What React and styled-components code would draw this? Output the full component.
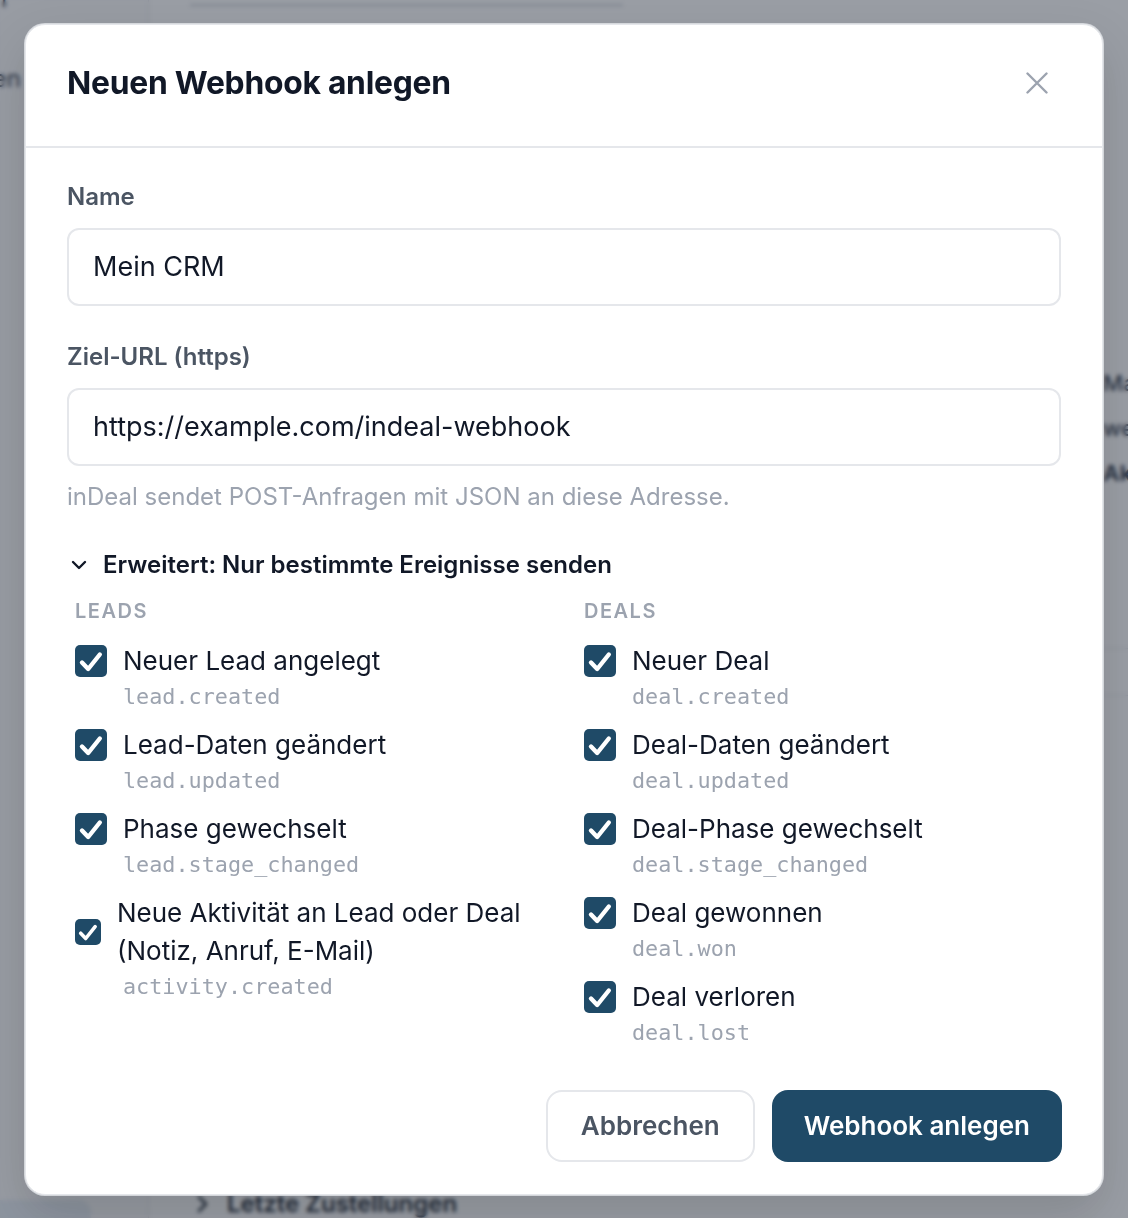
import React from "react";
import styled, { createGlobalStyle } from "styled-components";

const GlobalStyle = createGlobalStyle`
  html, body {
    margin: 0;
    padding: 0;
    height: 100%;
    overflow: hidden;
  }
  body {
    font-family: Inter, "Noto Sans", "Liberation Sans", sans-serif;
    background: #ffffff;
    -webkit-font-smoothing: antialiased;
  }
  * { box-sizing: border-box; }
`;

/* ---------- page behind the dialog ---------- */

const Page = styled.div`
  display: flex;
  height: 100vh;
  overflow: hidden;
  background: #ffffff;
`;

const Sidebar = styled.aside`
  width: 149px;
  flex-shrink: 0;
  display: flex;
  flex-direction: column;
  border-right: 1px solid #e5e7eb;
  background: #fbfbfc;
  overflow: hidden;
`;

const NavItem = styled.div`
  display: flex;
  justify-content: flex-end;
  font-size: 24px;
  color: #374151;
  white-space: nowrap;
  padding-right: ${(p) => p.$inset}px;
  line-height: 32px;
  margin-top: ${(p) => p.$top || 0}px;
`;

const SidebarCard = styled.div`
  margin-top: auto;
  width: 91px;
  height: 30px;
  margin-bottom: -12px;
  border-radius: 0 12px 0 0;
  background: #e8eef5;
`;

const Main = styled.main`
  flex: 1;
  display: grid;
  grid-template-columns: 889px 320px;
  column-gap: 24px;
  padding-left: 41px;
  overflow: hidden;
`;

const MainColumn = styled.div`
  display: flex;
  flex-direction: column;
  height: 100vh;
`;

const TopRule = styled.div`
  width: 433px;
  height: 6px;
  border-bottom: 2px solid #d1d5db;
`;

const Disclosure = styled.div`
  margin-top: auto;
  margin-bottom: -3px;
  display: flex;
  align-items: center;
  gap: 18px;
  padding-left: 7px;
  font-size: 24px;
  font-weight: 600;
  color: #1f2937;
  line-height: 34px;
`;

const SideInfo = styled.div`
  padding-top: 361px;
  display: flex;
  flex-direction: column;
`;

const InfoLine = styled.div`
  font-size: 22px;
  line-height: 45px;
  font-weight: ${(p) => (p.$bold ? 700 : 500)};
  color: #374151;
  white-space: nowrap;
`;

const InfoDivider = styled.div`
  height: 1px;
  background: #e5e7eb;
  margin-top: ${(p) => p.$top}px;
`;

/* ---------- dialog ---------- */

const Overlay = styled.div`
  position: fixed;
  inset: 0;
  display: flex;
  align-items: center;
  justify-content: center;
  background: rgba(31, 41, 55, 0.45);
  backdrop-filter: blur(2px);
`;

const Dialog = styled.div`
  width: 1078px;
  background: #ffffff;
  border: 1px solid #e5e7eb;
  border-radius: 20px;
  box-shadow: 0 0 0 1px rgba(229, 231, 235, 0.8), 0 20px 50px rgba(0, 0, 0, 0.15);
  display: flex;
  flex-direction: column;
`;

const Header = styled.div`
  display: flex;
  align-items: center;
  justify-content: space-between;
  padding: 38px 48px 43px 41px;
  border-bottom: 2px solid #e5e7eb;
`;

const Title = styled.h2`
  margin: 0;
  font-size: 31.8px;
  line-height: 40px;
  font-weight: 700;
  color: #111827;
  letter-spacing: -0.25px;
`;

const CloseButton = styled.button`
  border: none;
  background: none;
  padding: 6px;
  display: flex;
  cursor: pointer;
  color: #9ca3af;
`;

const Body = styled.div`
  padding: 34px 41px 0 41px;
  display: flex;
  flex-direction: column;
`;

const Field = styled.div`
  display: flex;
  flex-direction: column;
  & + & {
    margin-top: 36px;
  }
`;

const Label = styled.label`
  font-size: 24px;
  line-height: 30px;
  font-weight: 600;
  color: #4b5563;
  margin-bottom: 16px;
`;

const Input = styled.input`
  height: 78px;
  width: 100%;
  border: 2px solid #e5e7eb;
  border-radius: 12px;
  padding: 0 24px;
  font-family: inherit;
  font-size: 27px;
  color: #111827;
  outline: none;
  background: #ffffff;
`;

const Hint = styled.p`
  margin: 16px 0 0 0;
  font-size: 24px;
  line-height: 30px;
  color: #9ca3af;
`;

const AdvancedToggle = styled.button`
  margin-top: 38px;
  align-self: flex-start;
  display: flex;
  align-items: center;
  gap: 15px;
  border: none;
  background: none;
  padding: 0 0 0 3px;
  font-family: inherit;
  font-size: 24px;
  line-height: 30px;
  font-weight: 600;
  color: #111827;
  cursor: pointer;
`;

const EventGrid = styled.div`
  margin-top: 17px;
  padding-left: 8px;
  display: grid;
  grid-template-columns: 1fr 1fr;
  column-gap: 32px;
`;

const EventGroup = styled.div`
  display: flex;
  flex-direction: column;
  gap: 14px;
`;

const GroupTitle = styled.div`
  font-size: 20px;
  line-height: 28px;
  font-weight: 600;
  letter-spacing: 1.5px;
  color: #9ca3af;
  text-transform: uppercase;
  margin-bottom: 3px;
`;

const EventItem = styled.div`
  display: flex;
  flex-direction: column;
`;

const EventRow = styled.label`
  display: flex;
  align-items: center;
  gap: 16px;
  cursor: pointer;
`;

const Box = styled.span`
  width: ${(p) => p.$size || 32}px;
  height: ${(p) => p.$size || 32}px;
  flex-shrink: 0;
  border-radius: 5px;
  background: #1f4a67;
  display: flex;
  align-items: center;
  justify-content: center;
`;

const EventName = styled.span`
  font-size: 26px;
  line-height: 38px;
  color: #111827;
`;

const EventCode = styled.code`
  margin: 2px 0 0 48px;
  font-family: "DejaVu Sans Mono", "Liberation Mono", monospace;
  font-size: 21.8px;
  line-height: 30px;
  color: #9ca3af;
`;

const Footer = styled.div`
  display: flex;
  justify-content: flex-end;
  gap: 17px;
  padding: 42px 40px 32px 41px;
`;

const Button = styled.button`
  height: 72px;
  border-radius: 16px;
  font-family: inherit;
  font-size: 26px;
  font-weight: 600;
  cursor: pointer;
  padding: 0 ${(p) => (p.$primary ? 32 : 33)}px;
  border: ${(p) => (p.$primary ? "none" : "2px solid #e5e7eb")};
  background: ${(p) => (p.$primary ? "#1f4a67" : "#ffffff")};
  color: ${(p) => (p.$primary ? "#ffffff" : "#4b5563")};
`;

const Checkbox = ({ size }) => (
  <Box $size={size}>
    <svg width="100%" height="100%" viewBox="0 0 32 32" fill="none">
      <path
        d="M7 17.5 L13.2 24 L24.8 9.5"
        stroke="#ffffff"
        strokeWidth="4.4"
        strokeLinecap="round"
        strokeLinejoin="round"
      />
    </svg>
  </Box>
);

const leadEvents = [
  { name: "Neuer Lead angelegt", code: "lead.created" },
  { name: "Lead-Daten geändert", code: "lead.updated" },
  { name: "Phase gewechselt", code: "lead.stage_changed" },
  { name: "Neue Aktivität an Lead oder Deal (Notiz, Anruf, E-Mail)", code: "activity.created", size: 26 },
];

const dealEvents = [
  { name: "Neuer Deal", code: "deal.created" },
  { name: "Deal-Daten geändert", code: "deal.updated" },
  { name: "Deal-Phase gewechselt", code: "deal.stage_changed" },
  { name: "Deal gewonnen", code: "deal.won" },
  { name: "Deal verloren", code: "deal.lost" },
];

function EventList({ title, events }) {
  return (
    <EventGroup>
      <GroupTitle>{title}</GroupTitle>
      {events.map((ev) => (
        <EventItem key={ev.code}>
          <EventRow>
            <Checkbox size={ev.size} />
            <EventName>{ev.name}</EventName>
          </EventRow>
          <EventCode>{ev.code}</EventCode>
        </EventItem>
      ))}
    </EventGroup>
  );
}

function App() {
  return (
    <>
      <GlobalStyle />
      <Page>
        <Sidebar>
          <NavItem $top={-17} $inset={141}>Portal</NavItem>
          <NavItem $top={48} $inset={127}>Integrationen</NavItem>
          <SidebarCard />
        </Sidebar>
        <Main>
          <MainColumn>
            <TopRule />
            <Disclosure>
              <svg width="12" height="20" viewBox="0 0 12 20" fill="none">
                <path d="M2 3 L9 10 L2 17" stroke="#1f2937" strokeWidth="2.6" strokeLinecap="round" strokeLinejoin="round" />
              </svg>
              Letzte Zustellungen
            </Disclosure>
          </MainColumn>
          <SideInfo>
            <InfoLine>Max. Zustellversuche</InfoLine>
            <InfoLine>werden protokolliert</InfoLine>
            <InfoLine $bold>Aktiv</InfoLine>
            <InfoDivider $top={152} />
            <InfoDivider $top={46} />
          </SideInfo>
        </Main>
      </Page>

      <Overlay>
        <Dialog role="dialog" aria-modal="true">
          <Header>
            <Title>Neuen Webhook anlegen</Title>
            <CloseButton aria-label="Schließen">
              <svg width="22" height="22" viewBox="0 0 22 22" fill="none">
                <path d="M1.5 1.5 L20.5 20.5 M20.5 1.5 L1.5 20.5" stroke="currentColor" strokeWidth="2.4" strokeLinecap="round" />
              </svg>
            </CloseButton>
          </Header>

          <Body>
            <Field>
              <Label>Name</Label>
              <Input defaultValue="Mein CRM" />
            </Field>
            <Field>
              <Label>Ziel-URL (https)</Label>
              <Input defaultValue="https://example.com/indeal-webhook" />
              <Hint>inDeal sendet POST-Anfragen mit JSON an diese Adresse.</Hint>
            </Field>

            <AdvancedToggle>
              <svg width="18" height="12" viewBox="0 0 18 12" fill="none">
                <path d="M3 3 L9 9 L15 3" stroke="#111827" strokeWidth="2.4" strokeLinecap="round" strokeLinejoin="round" />
              </svg>
              Erweitert: Nur bestimmte Ereignisse senden
            </AdvancedToggle>

            <EventGrid>
              <EventList title="Leads" events={leadEvents} />
              <EventList title="Deals" events={dealEvents} />
            </EventGrid>
          </Body>

          <Footer>
            <Button>Abbrechen</Button>
            <Button $primary>Webhook anlegen</Button>
          </Footer>
        </Dialog>
      </Overlay>
    </>
  );
}

export default App;
